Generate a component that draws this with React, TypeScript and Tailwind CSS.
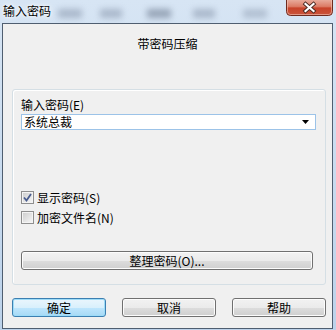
import React from "react"

const font = { fontFamily: '"Noto Sans CJK SC", "Noto Sans", sans-serif' }

export default function App() {
  return (
    <div
      className="w-[336px] h-[330px] overflow-hidden flex flex-col bg-[linear-gradient(#d7e5f4,#bcd2ea)] text-[12px] text-black"
      style={font}
    >
      {/* Title bar */}
      <div className="relative h-[23px] shrink-0 flex items-start justify-between pl-[3px] pt-[3px] pr-[3px]">
        {/* blurred window content behind the glass */}
        <div className="absolute left-[58px] top-[9px] w-[24px] h-[9px] bg-[#8d9bb0] blur-[3px] opacity-60" />
        <div className="absolute left-[100px] top-[9px] w-[22px] h-[9px] bg-[#8d9bb0] blur-[3px] opacity-60" />
        <div className="absolute left-[147px] top-[9px] w-[24px] h-[9px] bg-[#6d7b90] blur-[3px] opacity-60" />
        <div className="absolute left-[193px] top-[9px] w-[22px] h-[9px] bg-[#8d9bb0] blur-[3px] opacity-60" />
        <div className="absolute left-[243px] top-[9px] w-[24px] h-[9px] bg-[#8d9bb0] blur-[3px] opacity-50" />
        <div className="relative leading-[16px] [text-shadow:0_0_6px_#ffffff,0_0_3px_#ffffff]">输入密码</div>
        <CloseButton />
      </div>

      {/* Client area */}
      <div className="ml-[2px] w-[331px] h-[306px] shrink-0 border border-[#4f5e70] bg-[#f0f0f0]">
        <div className="pt-[12px] text-center leading-[16px]">带密码压缩</div>

        {/* Group box */}
        <div className="ml-[9px] mt-[37px] w-[314px] h-[196px] rounded-[3px] border border-[#d5dfe5] shadow-[inset_1px_1px_0_#ffffff] pt-[7px] pl-[8px]">
          <div className="leading-[16px]">输入密码(E)</div>
          <div className="mt-[1px] w-[295px] h-[16px] border border-[#9cc3e8] bg-white flex items-center justify-between pl-[2px] pr-[6px]">
            <span className="leading-[14px]">系统总裁</span>
            <svg width="7" height="4" viewBox="0 0 7 4">
              <path d="M0 0h7L3.5 4z" fill="#000" />
            </svg>
          </div>

          <div className="mt-[61px] flex flex-col gap-[7px]">
            <CheckRow checked label="显示密码(S)" />
            <CheckRow label="加密文件名(N)" />
          </div>

          <div className="mt-[27px]">
            <Button className="w-[292px]">整理密码(O)...</Button>
          </div>
        </div>

        {/* Bottom buttons */}
        <div className="mt-[13px] ml-[9px] flex gap-[16px]">
          <Button primary className="w-[94px]">确定</Button>
          <Button className="w-[94px]">取消</Button>
          <Button className="w-[94px]">帮助</Button>
        </div>
      </div>
    </div>
  )
}

function CloseButton() {
  return (
    <svg className="relative -mt-[4px]" width="47" height="17" viewBox="0 0 47 17">
      <defs>
        <linearGradient id="cb" x1="0" y1="0" x2="0" y2="1">
          <stop offset="0" stopColor="#eab1a2" />
          <stop offset="0.45" stopColor="#dc7c66" />
          <stop offset="0.55" stopColor="#c8432a" />
          <stop offset="1" stopColor="#c9563e" />
        </linearGradient>
      </defs>
      <path d="M0.5 0 V12.5 Q0.5 16.5 4.5 16.5 H42.5 Q46.5 16.5 46.5 12.5 V0" fill="url(#cb)" stroke="#6e2b1f" />
      <path d="M1.5 0 V12.5 Q1.5 15.5 4.5 15.5 H42.5 Q45.5 15.5 45.5 12.5 V0" fill="none" stroke="#f3c6b9" strokeOpacity="0.6" />
      <path d="M19.5 5 L27.5 12 M27.5 5 L19.5 12" stroke="#4a2a22" strokeWidth="4" strokeLinecap="square" />
      <path d="M19.5 5 L27.5 12 M27.5 5 L19.5 12" stroke="#ffffff" strokeWidth="2.2" strokeLinecap="square" />
    </svg>
  )
}

function CheckRow({ checked, label }: { checked?: boolean; label: string }) {
  return (
    <div className="flex items-center h-[13px]">
      <div className="w-[13px] h-[13px] border border-[#8f8f8f] bg-[#f4f4f4] p-[1px]">
        <div className="w-full h-full bg-[linear-gradient(135deg,#d0d0d0,#f4f4f4)] flex items-center justify-center">
          {checked && (
            <svg width="9" height="9" viewBox="0 0 9 9">
              <path d="M1 4.5 L3.5 7.5 L8 1" stroke="#4a5d8f" strokeWidth="1.8" fill="none" />
            </svg>
          )}
        </div>
      </div>
      <span className="ml-[3px] leading-[14px]">{label}</span>
    </div>
  )
}

function Button({
  children,
  className,
  primary,
}: {
  children: React.ReactNode
  className?: string
  primary?: boolean
}) {
  return (
    <div
      className={`${className} h-[19px] rounded-[3px] border flex items-center justify-center leading-[14px] ${
        primary
          ? "border-[#3c7fb1] bg-[linear-gradient(#eaf6fd_0%,#d9f0fc_50%,#bee6fd_51%,#a7d9f5_100%)] shadow-[inset_0_0_0_1px_#9ddcf8]"
          : "border-[#707070] bg-[linear-gradient(#f2f2f2_0%,#ebebeb_50%,#dddddd_51%,#cfcfcf_100%)] shadow-[inset_0_0_0_1px_#fcfcfc]"
      }`}
    >
      {children}
    </div>
  )
}
